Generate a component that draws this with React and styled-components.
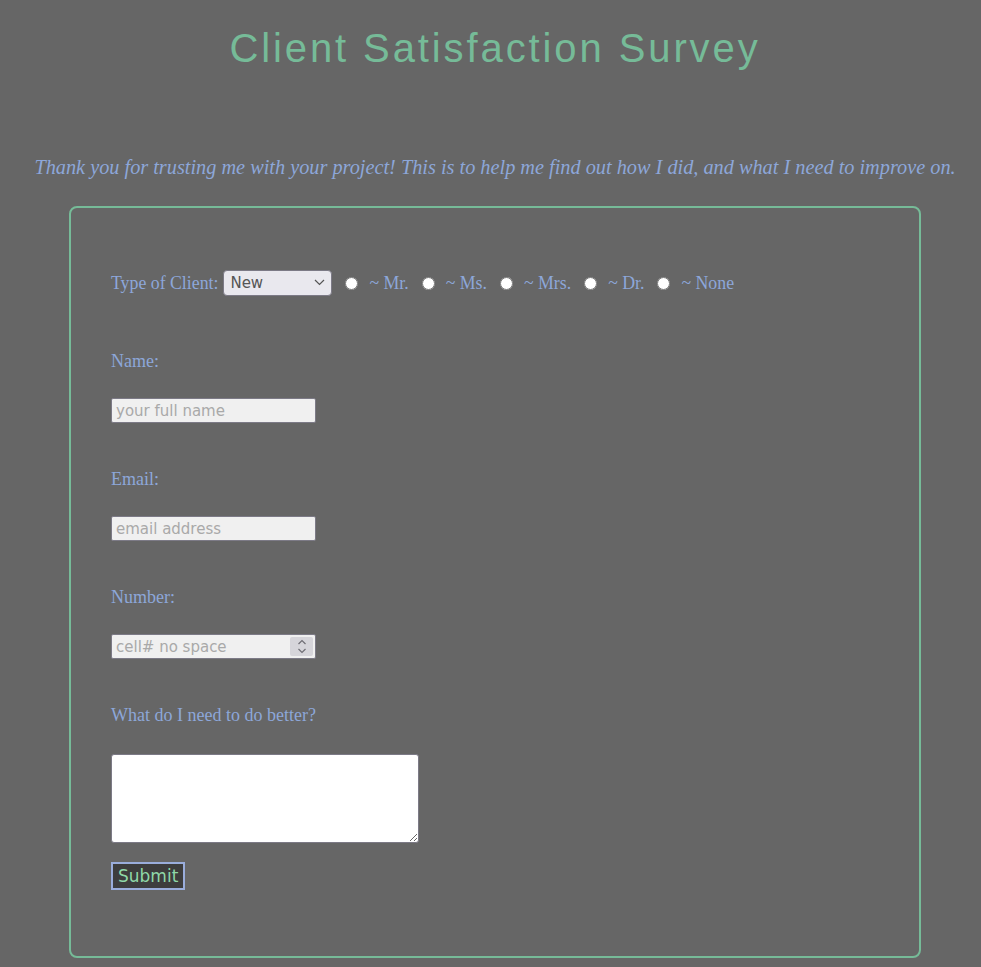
import React from "react";
import styled, { createGlobalStyle } from "styled-components";

const GlobalStyle = createGlobalStyle`
  html, body {
    margin: 0;
    padding: 0;
    background: #666666;
  }
  body {
    font-family: "Liberation Serif", "DejaVu Serif", serif;
  }
`;

const Page = styled.div`
  padding: 0 60px 10px 69px;
  display: flex;
  flex-direction: column;
  align-items: center;
`;

const Title = styled.h1`
  margin: 24px 0 0;
  font-family: "Liberation Sans", Arial, sans-serif;
  font-weight: 400;
  font-size: 40px;
  letter-spacing: 2.9px;
  line-height: 48px;
  color: #76bb98;
`;

const Intro = styled.p`
  margin: 83px -60px 0;
  font-style: italic;
  font-size: 20.3px;
  line-height: 24px;
  color: #8da7d9;
  white-space: nowrap;
`;

const Form = styled.form`
  align-self: stretch;
  margin-top: 27px;
  border: 2px solid #76bb98;
  border-radius: 8px;
  padding: 62px 40px 66px;
  display: flex;
  flex-direction: column;
  align-items: flex-start;
`;

const Row = styled.div`
  display: flex;
  align-items: center;
  height: 26px;
  color: #8da7d9;
  font-size: 17.8px;
  white-space: nowrap;
`;

const Label = styled.label`
  display: block;
  color: #8da7d9;
  font-size: 18px;
  line-height: 22px;
  margin-top: ${(p) => p.$top || 45}px;
`;

const SelectWrap = styled.span`
  position: relative;
  display: inline-flex;
  margin-left: 5px;
`;

const Select = styled.select`
  appearance: none;
  width: 109px;
  height: 26px;
  border: 1px solid #7c7a86;
  border-radius: 4px;
  background: #e9e8ee;
  color: #555;
  font-family: "DejaVu Sans", Tahoma, sans-serif;
  font-size: 15px;
  padding: 0 6px;
`;

const Chevron = styled.svg`
  position: absolute;
  right: 7px;
  top: 9px;
  width: 11px;
  height: 7px;
  pointer-events: none;
`;

const Radio = styled.input.attrs({ type: "radio" })`
  width: 13px;
  height: 13px;
  margin: 0 11px 0 13px;
  accent-color: #fff;
`;

const InputWrap = styled.span`
  position: relative;
  display: inline-flex;
  margin-top: 26px;
`;

const TextInput = styled.input`
  width: 205px;
  height: 25px;
  box-sizing: border-box;
  border: 1px solid #7c7a86;
  border-radius: 2px;
  background: #f0f0f0;
  font-family: "DejaVu Sans", Tahoma, sans-serif;
  font-size: 15px;
  padding: 0 4px;
  color: #333;
  appearance: textfield;
  -moz-appearance: textfield;

  &::placeholder {
    color: #a9a9a9;
  }

  &::-webkit-inner-spin-button,
  &::-webkit-outer-spin-button {
    -webkit-appearance: none;
    margin: 0;
  }
`;

const Spinner = styled.span`
  position: absolute;
  right: 3px;
  top: 3px;
  width: 23px;
  height: 19px;
  background: #d6d5da;
  border-radius: 2px;
  display: flex;
  align-items: center;
  justify-content: center;
  pointer-events: none;
`;

const TextArea = styled.textarea`
  margin-top: 28px;
  width: 308px;
  height: 89px;
  box-sizing: border-box;
  border: 1px solid #7c7a86;
  border-radius: 3px;
  background: #fff;
`;

const Submit = styled.button`
  margin-top: 19px;
  height: 28px;
  padding: 0 5px;
  background: #3d3d3d;
  border: 2px solid #9aaddb;
  color: #8fd8a8;
  font-family: "DejaVu Sans", Tahoma, sans-serif;
  font-size: 17px;
  line-height: 22px;
`;

const titles = ["Mr.", "Ms.", "Mrs.", "Dr.", "None"];

export default function App() {
  return (
    <>
      <GlobalStyle />
      <Page>
        <Title>Client Satisfaction Survey</Title>
        <Intro>
          Thank you for trusting me with your project! This is to help me find
          out how I did, and what I need to improve on.
        </Intro>
        <Form onSubmit={(e) => e.preventDefault()}>
          <Row>
            Type of Client:
            <SelectWrap>
              <Select defaultValue="new">
                <option value="new">New</option>
                <option value="returning">Returning</option>
              </Select>
              <Chevron viewBox="0 0 11 7">
                <path d="M1 1l4.5 4.5L10 1" fill="none" stroke="#555" strokeWidth="1.2" />
              </Chevron>
            </SelectWrap>
            {titles.map((t) => (
              <React.Fragment key={t}>
                <Radio name="title" value={t} />~ {t}
              </React.Fragment>
            ))}
          </Row>
          <Label $top={54}>Name:</Label>
          <InputWrap>
            <TextInput type="text" placeholder="your full name" />
          </InputWrap>
          <Label>Email:</Label>
          <InputWrap>
            <TextInput type="email" placeholder="email address" />
          </InputWrap>
          <Label>Number:</Label>
          <InputWrap>
            <TextInput type="number" placeholder="cell# no space" />
            <Spinner>
              <svg width="10" height="15" viewBox="0 0 10 15">
                <path
                  d="M1.5 5L5 1.5 8.5 5M1.5 10L5 13.5 8.5 10"
                  fill="none"
                  stroke="#6f6e75"
                  strokeWidth="1.2"
                />
              </svg>
            </Spinner>
          </InputWrap>
          <Label>What do I need to do better?</Label>
          <TextArea />
          <Submit type="submit">Submit</Submit>
        </Form>
      </Page>
    </>
  );
}
